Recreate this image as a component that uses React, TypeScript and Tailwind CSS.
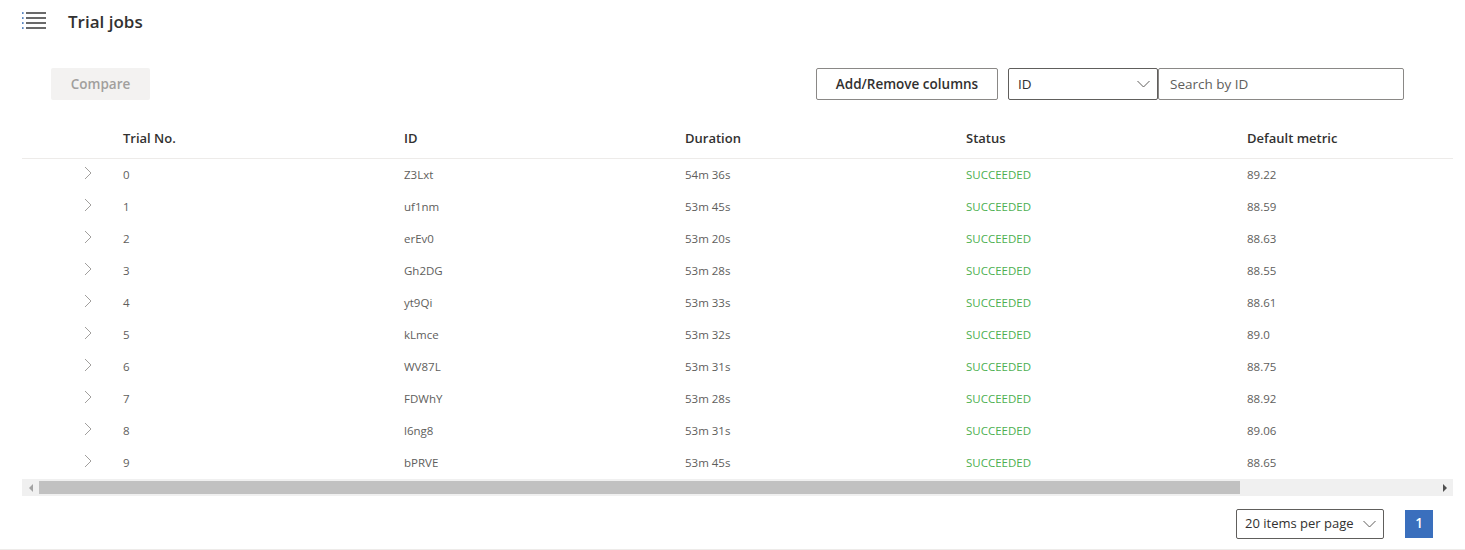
import React from "react";

const rows = [
  ["0", "Z3Lxt", "54m 36s", "89.22"],
  ["1", "uf1nm", "53m 45s", "88.59"],
  ["2", "erEv0", "53m 20s", "88.63"],
  ["3", "Gh2DG", "53m 28s", "88.55"],
  ["4", "yt9Qi", "53m 33s", "88.61"],
  ["5", "kLmce", "53m 32s", "89.0"],
  ["6", "WV87L", "53m 31s", "88.75"],
  ["7", "FDWhY", "53m 28s", "88.92"],
  ["8", "l6ng8", "53m 31s", "89.06"],
  ["9", "bPRVE", "53m 45s", "88.65"],
];

function Hamburger() {
  return (
    <svg width="26" height="18" viewBox="0 0 26 18" className="block">
      {[1, 6, 11, 16].map((y) => (
        <g key={y}>
          <rect x="0" y={y - 0.75} width="1.6" height="1.6" fill="#3b6fb6" />
          <rect x="4" y={y - 0.75} width="20" height="1.5" fill="#3a3a3a" />
        </g>
      ))}
    </svg>
  );
}

function ChevronRight() {
  return (
    <svg width="8" height="14" viewBox="0 0 8 14" className="block">
      <path d="M1 1 L7 7 L1 13" fill="none" stroke="#a19f9d" strokeWidth="1" />
    </svg>
  );
}

function ChevronDown() {
  return (
    <svg width="13" height="8" viewBox="0 0 13 8" className="block">
      <path d="M0.5 1 L6.5 7 L12.5 1" fill="none" stroke="#605e5c" strokeWidth="1" />
    </svg>
  );
}

export default function App() {
  return (
    <div className="w-[1465px] h-[550px] bg-white overflow-hidden font-['Segoe_UI','Open_Sans',sans-serif] text-[#323130]">
      {/* header */}
      <div className="flex items-center h-[42px] pl-[22px]">
        <Hamburger />
        <div className="ml-[20px] text-[17px] font-semibold text-[#323130] leading-none">Trial jobs</div>
      </div>

      {/* toolbar */}
      <div className="mt-[26px] flex items-center h-[32px] pl-[51px] pr-[61px]">
        <div className="w-[99px] h-[32px] bg-[#f3f2f1] rounded-[2px] flex items-center justify-center text-[13.5px] font-semibold text-[#a19f9d]">
          Compare
        </div>
        <div className="flex-1" />
        <div className="w-[182px] h-[32px] border border-[#8a8886] rounded-[2px] flex items-center justify-center text-[13.5px] font-semibold text-[#323130]">
          Add/Remove columns
        </div>
        <div className="ml-[10px] w-[150px] h-[32px] border border-[#605e5c] rounded-[2px] flex items-center justify-between pl-[9px] pr-[7px] text-[13.5px] text-[#323130]">
          <span>ID</span>
          <ChevronDown />
        </div>
        <div className="w-[246px] h-[32px] border border-[#8a8886] rounded-[2px] flex items-center pl-[11px] text-[13.5px] text-[#605e5c]">
          Search by ID
        </div>
      </div>

      {/* table */}
      <div className="mt-[15px] mr-[12px] ml-[22px] overflow-hidden">
        <div className="w-[1496px]">
          <div className="grid grid-cols-[91px_281px_281px_281px_281px_281px] h-[44px] items-center pt-[4px] border-b border-[#edebe9] text-[13px] font-semibold text-[#323130]">
            <div />
            <div className="pl-[10px]">Trial No.</div>
            <div className="pl-[10px]">ID</div>
            <div className="pl-[10px]">Duration</div>
            <div className="pl-[10px]">Status</div>
            <div className="pl-[10px]">Default metric</div>
          </div>
          {rows.map((r) => (
            <div
              key={r[0]}
              className="grid grid-cols-[91px_281px_281px_281px_281px_281px] h-[32px] items-center text-[11.5px] text-[#605e5c]"
            >
              <div className="flex justify-end pr-[21px] -mt-[4px]">
                <ChevronRight />
              </div>
              <div className="pl-[10px]">{r[0]}</div>
              <div className="pl-[10px]">{r[1]}</div>
              <div className="pl-[10px]">{r[2]}</div>
              <div className="pl-[10px] text-[#4caf50]">SUCCEEDED</div>
              <div className="pl-[10px]">{r[3]}</div>
            </div>
          ))}
        </div>
        {/* scrollbar */}
        <div className="flex h-[17px] bg-[#f0f0f0]">
          <div className="w-[17px] flex items-center justify-center">
            <div className="w-0 h-0 border-y-[4px] border-y-transparent border-r-[4px] border-r-[#a3a3a3]" />
          </div>
          <div className="flex-1 flex items-center">
            <div className="w-[1201px] h-[13px] bg-[#c1c1c1]" />
          </div>
          <div className="w-[17px] flex items-center justify-center">
            <div className="w-0 h-0 border-y-[4px] border-y-transparent border-l-[4px] border-l-[#505050]" />
          </div>
        </div>
      </div>

      {/* footer */}
      <div className="h-[54px] border-b border-[#edebe9] flex items-center justify-end pr-[32px] pt-[2px]">
        <div className="w-[148px] h-[30px] border border-[#605e5c] rounded-[2px] flex items-center justify-between pl-[8px] pr-[7px] text-[13px] text-[#323130]">
          <span>20 items per page</span>
          <ChevronDown />
        </div>
        <div className="ml-[21px] w-[28px] h-[28px] bg-[#3a6fbd] flex items-center justify-center text-[13.5px] font-semibold text-white">
          1
        </div>
      </div>
    </div>
  );
}
